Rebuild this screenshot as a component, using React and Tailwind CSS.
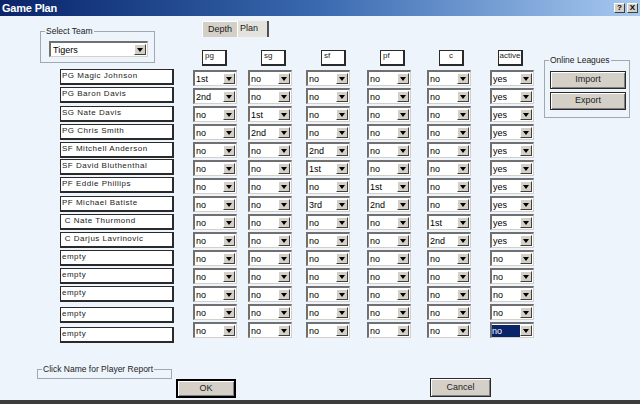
import React from 'react';

const FONT = "font-['Liberation_Sans',Arial,sans-serif]";

const names = [
  'PG Magic Johnson',
  'PG Baron Davis',
  'SG Nate Davis',
  'PG Chris Smith',
  'SF Mitchell Anderson',
  'SF David Bluthenthal',
  'PF Eddie Phillips',
  'PF Michael Batiste',
  '\u00a0C Nate Thurmond',
  '\u00a0C Darjus Lavrinovic',
  'empty',
  'empty',
  'empty',
  'empty',
  'empty',
];

// small shifts on the last name boxes, as in the original dialog
const nameGap = ['', 'mt-[2px]', 'mt-[3px]', 'mt-[2px]', 'mt-[2px]', 'mt-[1px]', 'mt-[2px]', 'mt-[3px]', 'mt-[2px]', 'mt-[2px]', 'mt-[2px]', 'mt-[2px]', 'mt-[2px]', 'mt-[5px]', 'mt-[4px]'];

const columns = [
  { label: 'pg', ml: '', hdrMl: 'ml-[9px]', align: 'text-left pl-[2px]' },
  { label: 'sg', ml: 'ml-[11px]', hdrMl: 'ml-[13px]', align: 'text-left pl-[2px]' },
  { label: 'sf', ml: 'ml-[14px]', hdrMl: 'ml-[15px]', align: 'text-left pl-[2px]' },
  { label: 'pf', ml: 'ml-[17px]', hdrMl: 'ml-[13px]', align: 'text-left pl-[2px]' },
  { label: 'c', ml: 'ml-[16px]', hdrMl: 'ml-[12px]', align: 'text-center' },
  { label: 'active', ml: 'ml-[19px]', hdrMl: 'ml-[8px]', align: 'text-center' },
];

// pg, sg, sf, pf, c, active
const rows = [
  ['1st', 'no', 'no', 'no', 'no', 'yes'],
  ['2nd', 'no', 'no', 'no', 'no', 'yes'],
  ['no', '1st', 'no', 'no', 'no', 'yes'],
  ['no', '2nd', 'no', 'no', 'no', 'yes'],
  ['no', 'no', '2nd', 'no', 'no', 'yes'],
  ['no', 'no', '1st', 'no', 'no', 'yes'],
  ['no', 'no', 'no', '1st', 'no', 'yes'],
  ['no', 'no', '3rd', '2nd', 'no', 'yes'],
  ['no', 'no', 'no', 'no', '1st', 'yes'],
  ['no', 'no', 'no', 'no', '2nd', 'yes'],
  ['no', 'no', 'no', 'no', 'no', 'no'],
  ['no', 'no', 'no', 'no', 'no', 'no'],
  ['no', 'no', 'no', 'no', 'no', 'no'],
  ['no', 'no', 'no', 'no', 'no', 'no'],
  ['no', 'no', 'no', 'no', 'no', 'no'],
];

const Arrow = () => (
  <div className="w-[12px] h-full shrink-0 bg-[#d4d0c8] border-t border-l border-t-white border-l-white border-b border-r border-b-[#404040] border-r-[#404040] flex items-center justify-center">
    <div className="w-0 h-0 border-l-[3px] border-r-[3px] border-t-[4px] border-l-transparent border-r-transparent border-t-black" />
  </div>
);

const Combo = ({ value, selected, className = '' }) => (
  <div className={`h-[16px] flex bg-white border-t-2 border-l-2 border-t-[#707070] border-l-[#707070] border-b border-r border-b-[#d4d0c8] border-r-[#d4d0c8] pr-[1px] py-[1px] ${className}`}>
    <div className="flex-1 flex items-center min-w-0">
      <span className={`h-[12px] leading-[12px] text-[9px] text-black ${selected ? 'bg-[#0a246a] text-white w-[28px]' : 'pl-[1px]'}`}>
        {value}
      </span>
    </div>
    <Arrow />
  </div>
);

const Button = ({ children, className = '' }) => (
  <div className={`bg-[#d4d0c8] border border-[#2a2a2a] shadow-[inset_1px_1px_0_#ffffff,inset_-1px_-1px_0_#808080] flex items-center justify-center text-[9px] text-[#222] ${className}`}>
    {children}
  </div>
);

const Group = ({ label, className = '', children }) => (
  <div className={`relative border border-[#a0a8b0] ${className}`}>
    <span className="absolute left-[4px] top-[-6px] px-[1px] bg-[#eef4fb] text-[8.5px] leading-[10px] text-[#222]">
      {label}
    </span>
    {children}
  </div>
);

export default function App() {
  return (
    <div className={`w-[640px] h-[404px] overflow-hidden flex flex-col bg-[#eef4fb] ${FONT}`}>
      {/* title bar */}
      <div className="h-[16px] shrink-0 flex items-center justify-between bg-linear-to-r from-[#0a246a] via-[#3a6ab0] to-[#a8caf0] pl-[2px] pr-[2px]">
        <span className="text-[11px] font-bold text-white leading-none tracking-[-0.2px]">Game Plan</span>
        <div className="flex gap-[2px]">
          <div className="w-[11px] h-[10px] bg-[#d4d0c8] border-t border-l border-t-white border-l-white border-b border-r border-b-[#404040] border-r-[#404040] flex items-center justify-center text-[8px] font-bold leading-none text-black">?</div>
          <div className="w-[11px] h-[10px] bg-[#d4d0c8] border-t border-l border-t-white border-l-white border-b border-r border-b-[#404040] border-r-[#404040] flex items-center justify-center text-[8px] font-bold leading-none text-black">X</div>
        </div>
      </div>

      {/* main area */}
      <div className="h-[350px] shrink-0 flex items-start pl-[40px]">
        {/* left column */}
        <div className="w-[134px] flex flex-col">
          <Group label="Select Team" className="mt-[15px] w-[115px] h-[32px] pl-[8px] pt-[9px]">
            <Combo value={<span className="text-[9px] pl-[1px]">Tigers</span>} className="w-[99px] h-[15px]" />
          </Group>
          <div className="ml-[20px] mt-[6px] flex flex-col">
            {names.map((n, i) => (
              <div
                key={i}
                className={`w-[114px] h-[16px] bg-white border border-[#2a2a2a] border-b-2 border-r-2 text-[8px] leading-[12px] tracking-[0.5px] text-[#222] pl-[1px] whitespace-nowrap overflow-hidden ${nameGap[i]}`}
              >
                {n}
              </div>
            ))}
          </div>
        </div>

        {/* depth chart */}
        <div className="ml-[19px] flex flex-col">
          <div className="ml-[9px] mt-[5px] flex h-[16px] text-[9px] text-[#222]">
            <div className="w-[35px] bg-[#d4d0c8] border-t border-l border-t-white border-l-white flex items-center justify-center">Depth</div>
            <div className="w-[32px] bg-[#e4e2dc] border-l border-l-white border-r-2 border-r-[#505050] flex items-center pl-[2px]">Plan</div>
          </div>
          <div className="mt-[13px] flex">
            {columns.map((c, ci) => (
              <div key={c.label} className={`w-[44px] flex flex-col ${c.ml}`}>
                <div className={`w-[25px] h-[16px] bg-white border border-[#2a2a2a] border-b-2 border-r-2 text-[8px] leading-[10px] text-[#222] ${c.align} ${c.hdrMl}`}>
                  {c.label}
                </div>
                <div className="mt-[4px] flex flex-col gap-[2px]">
                  {rows.map((r, ri) => (
                    <Combo key={ri} value={r[ci]} selected={ci === 5 && ri === 14} className="w-[44px]" />
                  ))}
                </div>
              </div>
            ))}
          </div>
        </div>

        {/* online leagues */}
        <Group label="Online Leagues" className="ml-[10px] mt-[44px] w-[86px] h-[58px] pl-[5px] pt-[10px] flex flex-col gap-[3px]">
          <Button className="w-[76px] h-[18px]">Import</Button>
          <Button className="w-[76px] h-[18px]">Export</Button>
        </Group>
      </div>

      {/* bottom row */}
      <div className="h-[34px] shrink-0 flex items-start pl-[37px]">
        <Group label="Click Name for Player Report" className="mt-[3px] w-[135px] h-[10px] border-b border-[#808890]" />
        <Button className="ml-[4px] mt-[13px] w-[60px] h-[19px] border-2 border-black">OK</Button>
        <Button className="ml-[194px] mt-[12px] w-[61px] h-[19px]">Cancel</Button>
      </div>

      <div className="flex-1 bg-[#3c3c3c]" />
    </div>
  );
}
